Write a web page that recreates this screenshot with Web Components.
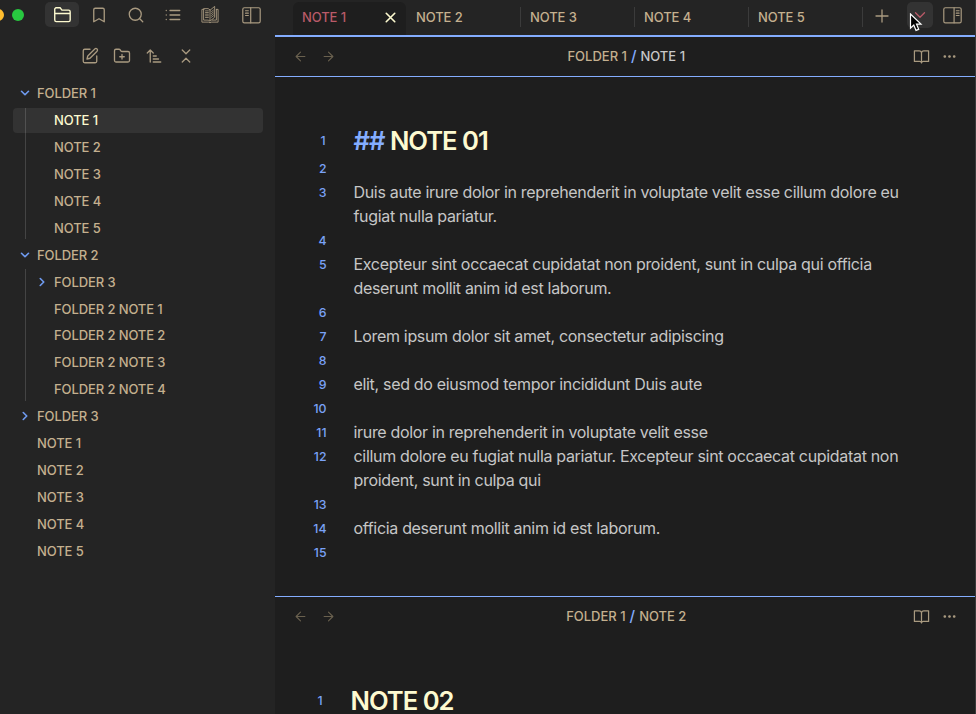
<!DOCTYPE html>
<html lang="en">
<head>
<meta charset="utf-8">
<title>NOTE 1</title>
<style>
html,body{margin:0;height:100%;overflow:hidden;background:#1e1e1e}
body{font-family:Inter,"Liberation Sans",sans-serif;font-size:13px;font-weight:450;color:#c4b394;
--bg:#1e1e1e;--side:#242424;--tan:#c4b08f;--cream:#fdfad0;--blue:#84adff;--hover:#333}
</style>
</head>
<body>
<app-window></app-window>
<script>
const ICONS={
folder:'<path d="M3.500 3.500h5.500l2.300 3h8.400a2 2 0 0 1 2 2v10.500a2 2 0 0 1-2 2H4.200a2 2 0 0 1-2-2v-13.500a2 2 0 0 1 2-2M2.200 10.700h19"/>',
bookmark:'<path d="m19 21-7-4-7 4V5a2 2 0 0 1 2-2h10a2 2 0 0 1 2 2v16z"/>',
search:'<circle cx="11" cy="11" r="8"/><path d="m21 21-4.3-4.3"/>',
list:'<path d="M8 6h13M8 12h13M8 18h13M3 6h.01M3 12h.01M3 18h.01"/>',
books:'<path d="M4 4.500H1.200V21.500h9.300l1.500 1 1.500-1h9.300V4.500H20.500M4 3.500h5.500l2.500 1.600v15l-2.500-1.300H4zM12.200 5.500l6-5v14.500l-6 5M20.500 4.500v14.300h-5.500"/><path stroke-width="1.1" d="M6 6.500h3.800M6 8.700h3.800M6 10.900h3.800M6 13.100h3.800M6 15.300h3.800M14 7.500l2.600-2M14 10l2.600-2M14 12.500l2.600-2M14 15l2.600-2"/>',
left:'<rect x="1" y="2.200" width="22" height="19" rx="2"/><path d="M11 2.200v19M4.500 6h3.500M4.500 9h3.500M4.500 12h3.500"/>',
right:'<rect x="1" y="2.200" width="22" height="19" rx="2"/><path d="M14 2.200v19M16.800 6h3.500M16.800 9h3.500M16.800 12h3.500"/>',
edit:'<path d="M12 3H5a2 2 0 0 0-2 2v14a2 2 0 0 0 2 2h14a2 2 0 0 0 2-2v-7"/><path d="M18.4 2.6a2.1 2.1 0 0 1 3 3L12 15l-4 1 1-4z"/>',
newfolder:'<path d="M4 20h16a2 2 0 0 0 2-2V8a2 2 0 0 0-2-2h-7.9a2 2 0 0 1-1.7-.9l-.8-1.2A2 2 0 0 0 7.9 3H4a2 2 0 0 0-2 2v13c0 1.1.9 2 2 2ZM12 10v6M9 13h6"/>',
sort:'<path d="m3 8 4-4 4 4M7 4v16M11 12h4M11 16h7M11 20h10"/>',
collapse:'<path d="m7 20 5-5 5 5M7 4l5 5 5-5"/>',
chevron:'<path d="m6 9 6 6 6-6"/>',
next:'<path d="m9 18 6-6-6-6"/>',
plus:'<path d="M12 4v16M4 12h16"/>',
close:'<path d="M18 6 6 18M6 6l12 12"/>',
back:'<path d="m12 19-7-7 7-7M19 12H5"/>',
forward:'<path d="M5 12h14M12 5l7 7-7 7"/>',
book:'<path d="M2 4h6.5a3.5 3.5 0 0 1 3.5 2.5A3.5 3.5 0 0 1 15.500 4H22v15h-7.500A2.500 2.500 0 0 0 12 21a2.500 2.500 0 0 0-2.500-2H2zM12 6.500V21"/>',
more:'<g fill="currentColor"><circle cx="4.500" cy="12" r="1.300"/><circle cx="12" cy="12" r="1.300"/><circle cx="19.500" cy="12" r="1.300"/></g>'
};
function define(name,render){
  customElements.define(name,class extends HTMLElement{
    connectedCallback(){
      if(this.shadowRoot)return;
      this.attachShadow({mode:'open'}).innerHTML=render(this);
    }
  });
}
define('ui-icon',e=>`<style>:host{display:block;flex:none}svg{display:block}</style>
<svg width="${e.getAttribute('size')||18}" height="${e.getAttribute('size')||18}" viewBox="0 0 24 24" fill="none" stroke="currentColor" stroke-width="${e.getAttribute('weight')||1.75}" stroke-linecap="round" stroke-linejoin="round">${ICONS[e.getAttribute('name')]}</svg>`);

define('side-ribbon',()=>`<style>
:host{display:block;height:73px;color:#a99a80}
.top{display:flex;height:30px;align-items:center}
.lights{display:flex;gap:8px;margin-left:-8px;width:53px}
.lights i{width:12px;height:12px;border-radius:50%;background:#ffbd2e}.lights i+i{background:#28c840}
.b{width:37px;display:flex;justify-content:center}
.sel{width:34px;height:25px;border-radius:5px;background:#333;align-items:center;color:var(--cream);margin:-1px 1.500px 0 0}
.top .b:last-child{margin-left:4px}
.tools{display:flex;gap:14px;margin:17px 0 0 81px}
</style>
<div class="top"><div class="lights"><i></i><i></i></div>
<div class="b sel"><ui-icon name="folder" size="19"></ui-icon></div>
<div class="b"><ui-icon name="bookmark"></ui-icon></div><div class="b"><ui-icon name="search"></ui-icon></div>
<div class="b"><ui-icon name="list"></ui-icon></div><div class="b"><ui-icon name="books" weight="1.2"></ui-icon></div>
<div class="b"><ui-icon name="left" size="19" weight="1.5"></ui-icon></div></div>
<div class="tools"><ui-icon name="edit"></ui-icon><ui-icon name="newfolder"></ui-icon><ui-icon name="sort"></ui-icon><ui-icon name="collapse"></ui-icon></div>`);

define('tree-item',e=>{const a=e.getAttribute('arrow');return `<style>
:host{display:block;height:24.900px;margin-bottom:2px;border-radius:4px;color:var(--tan)}
:host([selected]){background:#333;color:var(--cream)}
.row{display:flex;align-items:center;height:100%;padding-left:${e.hasAttribute('nested')?22:5}px}
.a{width:14px;margin-right:5px;color:#6f9bf0}
span{letter-spacing:var(--ls-tree)}
</style><div class="row"><div class="a">${a?`<ui-icon name="${a}" size="14" weight="2.8"></ui-icon>`:''}</div><span><slot></slot></span></div>`});

define('tree-group',()=>`<style>:host{display:block;position:relative}
:host::after{content:"";position:absolute;left:12px;top:0;bottom:1px;width:1px;background:#fff;opacity:.15}</style><slot></slot>`);

define('file-tree',()=>`<style>:host{display:block;padding:8px 12px 0 13px}</style>
<tree-item arrow="chevron">FOLDER 1</tree-item>
<tree-group><tree-item nested selected>NOTE 1</tree-item>${[2,3,4,5].map(n=>`<tree-item nested>NOTE ${n}</tree-item>`).join('')}</tree-group>
<tree-item arrow="chevron">FOLDER 2</tree-item>
<tree-group><tree-item nested arrow="next">FOLDER 3</tree-item>${[1,2,3,4].map(n=>`<tree-item nested>FOLDER 2 NOTE ${n}</tree-item>`).join('')}</tree-group>
<tree-item arrow="next">FOLDER 3</tree-item>
${[1,2,3,4,5].map(n=>`<tree-item>NOTE ${n}</tree-item>`).join('')}`);

define('tab-item',e=>`<style>
:host{display:flex;flex:none;box-sizing:border-box;height:20px;width:114px;margin-top:7px;align-items:center;padding-left:9px;border-right:1px solid #3b3b3b;color:var(--tan)}
:host([active]){width:113px;height:33px;margin:2px 1px 0 0;padding:0 7px 3px 9px;justify-content:space-between;border:0;background:var(--bg);border-radius:6px 6px 0 0;color:#b95a68}
ui-icon{color:var(--cream)}span{letter-spacing:var(--ls-tab)}
</style><span><slot></slot></span>${e.hasAttribute('active')?'<ui-icon name="close" size="17" weight="2.3"></ui-icon>':''}`);

define('tab-bar',()=>`<style>
:host{display:flex;height:35px;background:var(--side);border-bottom:2px solid var(--blue);padding-left:18px;color:#a99a80}
.plus{margin:7px 0 0 10px}.down{flex:none;width:26px;height:26px;margin:2px 0 0 16px;background:#333;border-radius:5px;display:flex;align-items:center;justify-content:center;color:#b95a68}
.r{margin:6px 0 0 9.500px}
</style><tab-item active>NOTE 1</tab-item>${[2,3,4,5].map(n=>`<tab-item>NOTE ${n}</tab-item>`).join('')}
<ui-icon class="plus" name="plus"></ui-icon><div class="down"><ui-icon name="chevron"></ui-icon></div><ui-icon class="r" name="right" size="19" weight="1.5"></ui-icon>`);

define('pane-header',()=>`<style>
:host{display:grid;box-sizing:border-box;grid-template-columns:1fr auto 1fr;height:39px;align-items:center;padding:0 18.500px 1px 18px;color:#a99a80}
div{display:flex;align-items:center}.nav{gap:13px;color:#6a614f}.act{justify-content:flex-end;gap:12px}
.path{color:var(--tan);white-space:pre;line-height:16px;padding-left:3px}.path i{color:var(--blue);font-size:15px;font-style:normal}
</style><div class="nav"><ui-icon name="back" size="15"></ui-icon><ui-icon name="forward" size="15"></ui-icon></div>
<div class="path"><span>FOLDER 1</span><i> / </i><slot></slot></div>
<div class="act"><ui-icon name="book" size="17"></ui-icon><ui-icon name="more" size="15"></ui-icon></div>`);

define('note-line',e=>`<style>
:host{display:flex;line-height:24px;min-height:24px}
.n{box-sizing:border-box;width:51.500px;height:24px;flex:none;padding-top:1px;text-align:right;color:#7aa2f7;font-size:12.300px;font-weight:500}
.t{margin-left:27px;font-size:16px;font-weight:400;color:#c6c6c6;white-space:pre;letter-spacing:var(--ls-text)}
:host([heading]){line-height:31px}
:host([heading]) .n{padding:0 1px 0 0}
:host([heading]) .t{font-size:25.600px;font-weight:600;color:var(--cream);letter-spacing:var(--ls-head)}
</style><span class="n">${e.getAttribute('n')}</span><span class="t"><slot></slot></span>`);

const NOTE=[[3,'Duis aute irure dolor in reprehenderit in voluptate velit esse cillum dolore eu\nfugiat nulla pariatur.'],[4,''],
[5,'Excepteur sint occaecat cupidatat non proident, sunt in culpa qui officia\ndeserunt mollit anim id est laborum.'],[6,''],
[7,'Lorem ipsum dolor sit amet, consectetur adipiscing'],[8,''],[9,'elit, sed do eiusmod tempor incididunt Duis aute'],[10,''],
[11,'irure dolor in reprehenderit in voluptate velit esse'],[12,'cillum dolore eu fugiat nulla pariatur. Excepteur sint occaecat cupidatat non\nproident, sunt in culpa qui'],[13,''],
[14,'officia deserunt mollit anim id est laborum.'],[15,'']];

define('note-pane',e=>`<style>
:host{display:block;box-sizing:border-box}
:host([first]){height:560px;border-bottom:1px solid var(--blue)}
:host([first]) pane-header{height:40px;border-bottom:1px solid var(--blue)}
.body{padding-top:48px}:host(:not([first])) .body{padding-top:49px;margin-left:-3px}
.h{color:var(--blue)}.w{color:#c8c8c8}
</style>${e.hasAttribute('first')?`<pane-header><span class="w">NOTE 1</span></pane-header><div class="body">
<note-line heading n="1"><span class="h">##</span> NOTE 01</note-line><note-line n="2"></note-line>${NOTE.map(([n,t])=>`<note-line n="${n}">${t}</note-line>`).join('')}</div>`
:`<pane-header>NOTE 2</pane-header><div class="body"><note-line heading n="1">NOTE 02</note-line></div>`}`);

define('mouse-pointer',()=>`<style>:host{position:absolute;left:909px;top:13px}svg{display:block}</style>
<svg width="14" height="20" viewBox="0 0 14 20"><path d="M1.500 1v14.200l3.300-3.100 2.200 5.300 2.700-1.100-2.200-5.200h4.500z" fill="#000" stroke="#fff" stroke-width="1.200"/></svg>`);

define('app-window',()=>`<style>
:host{display:grid;grid-template-columns:275px 1fr;height:714px;position:relative;
--ls-tree:-.1px;--ls-tab:-.1px;--ls-text:-.320px;--ls-head:-1px}
aside{background:var(--side)}main{background:var(--bg);min-width:0;border-right:1px solid #3a3a3a}
</style><aside><side-ribbon></side-ribbon><file-tree></file-tree></aside>
<main><tab-bar></tab-bar><note-pane first></note-pane><note-pane></note-pane></main><mouse-pointer></mouse-pointer>`);
</script>
</body>
</html>
